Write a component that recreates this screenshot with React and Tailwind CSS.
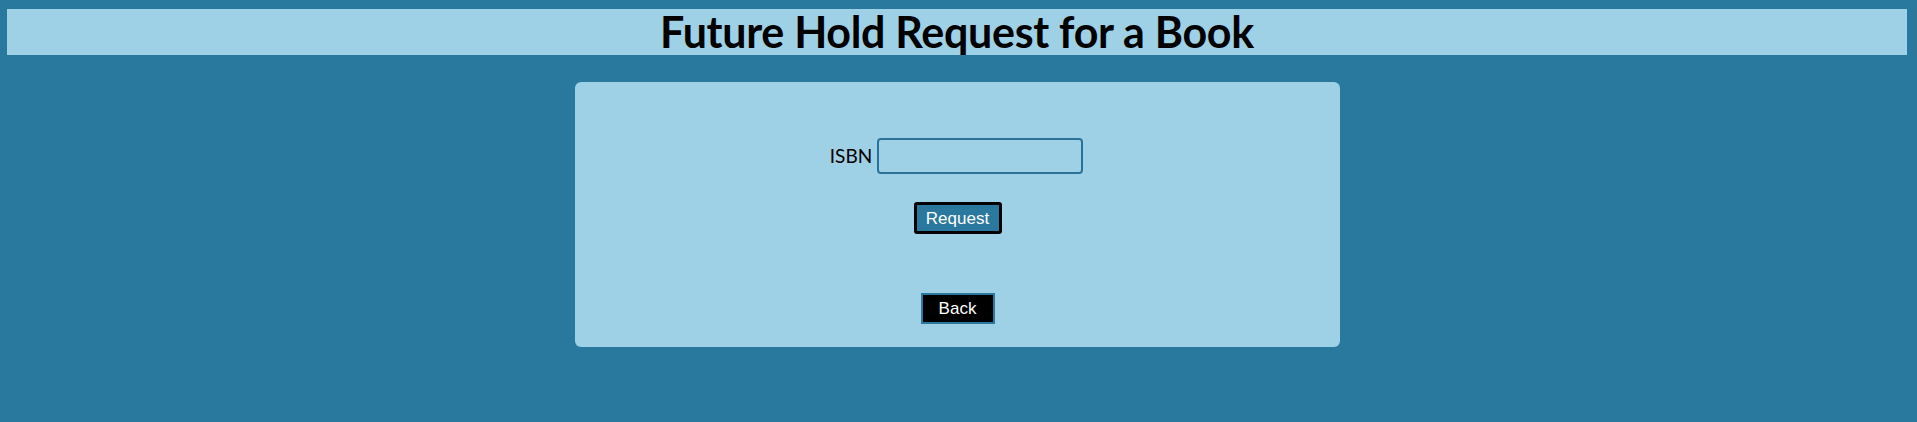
export default function App() {
  return (
    <div className="min-h-[422px] bg-[#29789e] pt-[9px] pb-[75px]">
      <header className="ml-[7px] mr-[10px] h-[46px] bg-[#9ed1e6] flex items-center justify-center">
        <h1 className="font-['Lato',sans-serif] font-bold text-[43px] leading-none text-black tracking-[-0.3px] -mt-[1px]">
          Future Hold Request for a Book
        </h1>
      </header>

      <div className="flex justify-center pr-[2px] mt-[27px]">
        <div className="w-[765px] h-[265px] rounded-[6px] bg-[#9ed1e6] pt-[56px] flex flex-col items-center">
          <div className="flex items-center gap-[5px] pr-[2px]">
            <label className="font-['Lato',sans-serif] text-[19px] text-black">ISBN</label>
            <input
              type="text"
              className="w-[206px] h-[36px] rounded-[4px] border-2 border-[#2a7299] bg-[#9ed1e6] outline-none px-2"
            />
          </div>

          <button className="mt-[28px] w-[88px] h-[32px] rounded-[3px] border-[3px] border-black bg-[#2a789e] text-white text-[17px] font-['Liberation_Sans',sans-serif] leading-none">
            Request
          </button>

          <button className="mt-[59px] w-[74px] h-[31px] border-2 border-[#2a789e] bg-black text-white text-[17px] font-['Liberation_Sans',sans-serif] leading-none">
            Back
          </button>
        </div>
      </div>
    </div>
  )
}
